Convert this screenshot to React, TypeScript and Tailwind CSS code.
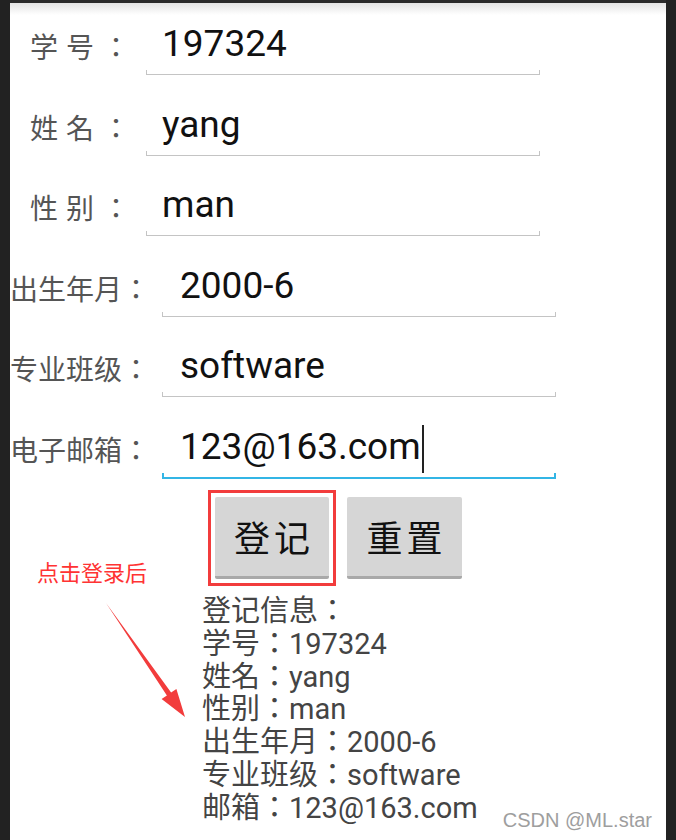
import React from 'react';

const fontCn = "font-['Noto_Sans_CJK_SC',sans-serif]";
const fontLabel = "font-['Noto_Sans_CJK_TC',sans-serif]";
const fontMix = "font-['Roboto','Noto_Sans_CJK_TC',sans-serif]";

type Field = { label: string; value: string; wide?: boolean; focused?: boolean };

const fields: Field[] = [
    { label: '学号：', value: '197324' },
    { label: '姓名：', value: 'yang' },
    { label: '性别：', value: 'man' },
    { label: '出生年月：', value: '2000-6', wide: true },
    { label: '专业班级：', value: 'software', wide: true },
    { label: '电子邮箱：', value: '123@163.com', wide: true, focused: true },
];

const info = [
    '登记信息：',
    '学号：197324',
    '姓名：yang',
    '性别：man',
    '出生年月：2000-6',
    '专业班级：software',
    '邮箱：123@163.com',
];

function Underline({ focused }: { focused?: boolean }) {
    if (focused) {
        return (
            <div className="h-[6px] flex items-end">
                <div className="w-full h-[6px] border-x-2 border-b-[2px] border-[#33b5e5] -mb-[1px]" />
            </div>
        );
    }
    return (
        <div className="h-[6px] flex items-end">
            <div className="w-full h-[5px] border-x border-b border-[#c4c4c4]" />
        </div>
    );
}

function Row({ field, last }: { field: Field; last?: boolean }) {
    return (
        <div className={`flex items-start ${last ? 'h-[62px]' : 'h-[80.6px]'}`}>
            {/* Label */}
            <div
                className={`h-[62px] flex items-center text-[28px] text-[#555] ${fontLabel} ${
                    field.wide ? 'w-[152px] pl-0' : 'w-[136px] pl-[20px] tracking-[8px]'
                }`}
            >
                {field.label}
            </div>

            {/* Input */}
            <div className="w-[394px]">
                <div
                    className={`h-[54px] pt-[5px] leading-[48px] text-[37px] text-[#111] font-['Roboto',sans-serif] flex items-start ${
                        field.wide ? 'pl-[18px]' : 'pl-[16px]'
                    }`}
                >
                    <span>{field.value}</span>
                    {field.focused && <span className="inline-block w-[2px] h-[48px] mt-[2px] ml-[1px] bg-[#222]" />}
                </div>
                <Underline focused={field.focused} />
            </div>
        </div>
    );
}

export default function App() {
    return (
        <div className="relative w-[676px] h-[840px] bg-[#222] px-[10px] overflow-hidden">
            <div className="relative h-full bg-white">
                {/* Status bar edge */}
                <div className="h-[3px] bg-[#2b2b2b]" />
                <div className="h-[12px] bg-gradient-to-b from-[#e4e4e4] to-white" />

                {/* Form */}
                <div>
                    {fields.map((f, i) => (
                        <Row key={i} field={f} last={i === fields.length - 1} />
                    ))}
                </div>

                {/* Buttons */}
                <div className="flex items-start mt-[10px] ml-[198px] gap-[11px]">
                    <div className="border-[3px] border-[#f23c3c] p-[4px]">
                        <button className={`w-[114px] h-[82px] bg-[#d6d6d6] rounded-[2px] border-b-[3px] border-[#a9a9a9] text-[36px] text-[#111] tracking-[4px] pl-[4px] ${fontCn}`}>
                            登记
                        </button>
                    </div>
                    <button className={`mt-[7px] w-[115px] h-[82px] bg-[#d6d6d6] rounded-[2px] border-b-[3px] border-[#a9a9a9] text-[36px] text-[#111] tracking-[4px] pl-[4px] ${fontCn}`}>
                        重置
                    </button>
                </div>

                {/* Result */}
                <div className={`mt-[9px] ml-[192px] text-[29px] leading-[32.8px] text-[#444] ${fontMix}`}>
                    {info.map((line, i) => (
                        <div key={i}>{line}</div>
                    ))}
                </div>
            </div>

            {/* Annotation */}
            <div className={`absolute left-[37px] top-[555px] text-[22px] text-[#f33] ${fontCn}`}>点击登录后</div>
            <svg className="absolute inset-0 pointer-events-none" width="676" height="840" viewBox="0 0 676 840">
                <polygon
                    points="106,603 171.1,692.6 176.4,688.9 185,717 161.6,699.1 166.9,695.4"
                    fill="#f23c3c"
                />
            </svg>

            {/* Watermark */}
            <div className="absolute right-[24px] bottom-[5px] text-[20px] text-[#9e9e9e] font-['Liberation_Sans',sans-serif]">
                CSDN @ML.star
            </div>
        </div>
    );
}
